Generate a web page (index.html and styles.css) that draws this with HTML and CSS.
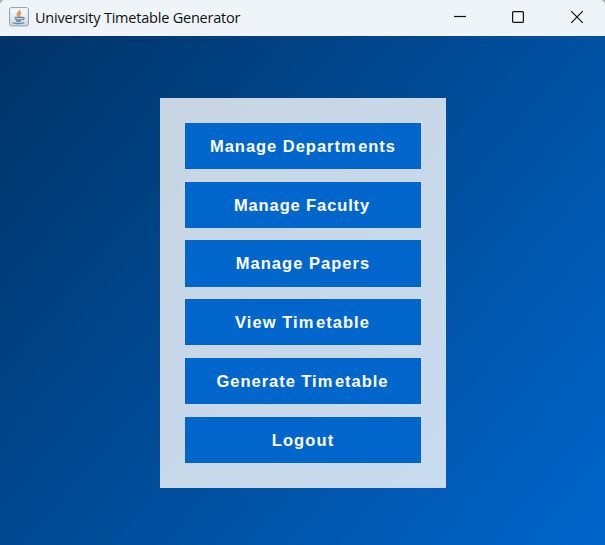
FILE: index.html
```html
<!DOCTYPE html>
<html lang="en">
<head>
<meta charset="utf-8">
<title>University Timetable Generator</title>
<link rel="stylesheet" href="styles.css">
</head>
<body>
<div class="window">
  <header class="titlebar">
    <svg class="app-icon" width="20" height="20" viewBox="0 0 20 20" fill="none">
      <defs>
        <linearGradient id="tile" x1="0" y1="0" x2="0" y2="1">
          <stop offset="0" stop-color="#fafcfd"/>
          <stop offset=".5" stop-color="#e6edf2"/>
          <stop offset="1" stop-color="#cbd8e2"/>
        </linearGradient>
      </defs>
      <rect x=".6" y=".6" width="18.8" height="18.3" rx="1.8" fill="url(#tile)" stroke="#8b9eae"/>
      <path d="M10.600 2.800c1 2-2.500 2.700-2.300 4.500.1 1 1 1.600 1.200 2.300M12.300 5.500c-2 .8-2.400 1.700-1.700 2.600.5.700.2 1.200-.3 1.700" stroke="#e8924e" stroke-width="1.600"/>
      <path d="M5.500 10.500h7.700M6.200 12.300c1.500.7 4.800.7 6.500.1M7 14c1.500.6 3.700.6 5.200 0M13.300 10.500c2.400-.6 2.500 1.700-.2 2.300M4.200 15.300c-1.500 1.400 8.500 2 11 .2" stroke="#6a8ba3" stroke-width="1.300"/>
    </svg>
    <h1 class="title">University Timetable Generator</h1>
    <div class="controls">
      <svg width="14" height="14" viewBox="0 0 14 14"><path d="M2 6.500h12"/></svg>
      <svg width="14" height="14" viewBox="0 0 14 14"><rect x="1.600" y="1.600" width="10.800" height="10.800" rx="1"/></svg>
      <svg width="14" height="14" viewBox="0 0 14 14"><path d="M1.200 1.200l11.600 11.600M12.800 1.200L1.200 12.800"/></svg>
    </div>
  </header>
  <main class="content">
    <nav class="menu">
      <button class="item departments">Manage Depart<span class="wide">m</span>ents</button>
      <button class="item faculty">Manage Faculty</button>
      <button class="item papers">Manage Papers</button>
      <button class="item view">View Ti<span class="wide">m</span>etable</button>
      <button class="item generate">Generate Ti<span class="wide">m</span>etable</button>
      <button class="item logout">Logout</button>
    </nav>
  </main>
</div>
</body>
</html>
```
FILE: styles.css
```css
body {
  margin: 0;
  background: #a9adb0;
}

.window {
  display: flex;
  flex-direction: column;
  height: 545px;
  overflow: hidden;
  border-radius: 5px 5px 0 0;
}

.titlebar {
  display: flex;
  align-items: center;
  box-sizing: border-box;
  height: 36px;
  padding: 0 21px 2px 9px;
  background: #eef4f7;
}

.app-icon {
  flex: none;
}

.title {
  margin: 0 0 0 6px;
  padding-top: 1px;
  font: 400 14.5px/20px "Open Sans", "Noto Sans", sans-serif;
  letter-spacing: -0.21px;
  white-space: nowrap;
  color: #111;
}

.controls {
  display: flex;
  gap: 45px;
  margin-left: auto;
}

.controls svg {
  fill: none;
  stroke: #111;
  stroke-width: 1.2;
}

.content {
  flex: 1;
  display: flex;
  justify-content: center;
  align-items: flex-start;
  padding-top: 62px;
  background: linear-gradient(130.07deg, #003366, #0066cc);
}

.menu {
  display: flex;
  flex-direction: column;
  gap: 13px;
  box-sizing: border-box;
  width: 286px;
  height: 390px;
  margin-left: 1px;
  padding: 25px;
  background: rgba(255, 255, 255, 0.784);
}

.item {
  flex: none;
  height: 46px;
  padding: 0;
  border: 0;
  background: #0066cc;
  color: #fff;
  font: 700 16.5px/20px "Liberation Sans", Arial, sans-serif;
  letter-spacing: 1px;
  white-space: nowrap;
}

.departments {
  letter-spacing: 0.97px;
}

.faculty {
  padding-right: 2px;
  letter-spacing: 0.88px;
}

.papers {
  height: 47px;
  margin: -1px 0;
  padding-bottom: 1px;
  letter-spacing: 1.03px;
}

.view {
  padding-right: 1px;
  letter-spacing: 1.04px;
}

.generate {
  padding-right: 1px;
  letter-spacing: 0.97px;
}

.logout {
  letter-spacing: 1.1px;
}

.wide {
  letter-spacing: 2.600px;
}
```
